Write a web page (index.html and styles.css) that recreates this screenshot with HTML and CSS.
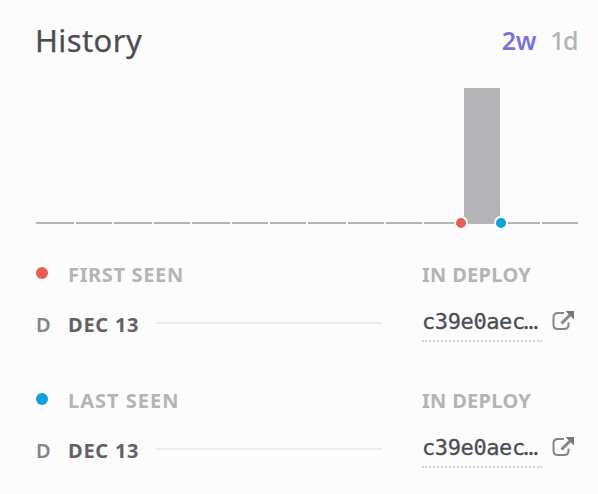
FILE: index.html
```html
<!DOCTYPE html>
<html lang="en">
<head>
<meta charset="utf-8">
<title>History</title>
<link rel="stylesheet" href="styles.css">
</head>
<body>
<main class="panel">
  <header class="header">
    <h1 class="title">History</h1>
    <nav class="ranges"><span class="range active">2w</span><span class="range day">1d</span></nav>
  </header>
  <div class="chart">
    <i></i><i></i><i></i><i></i><i></i><i></i><i></i><i></i><i></i><i></i><i></i>
    <i class="bar"><b class="marker first"></b><b class="marker last"></b></i>
    <i></i><i></i>
  </div>
  <section class="event">
    <span class="dot first"></span>
    <span class="label seen-first">FIRST SEEN</span>
    <span class="label deploy">IN DEPLOY</span>
    <span class="env">D</span>
    <div class="when"><span class="date">DEC 13</span><span class="rule"></span></div>
    <div class="commit">
      <span class="hash">c39e0aec<span class="dots">…</span></span>
      <svg class="open" viewBox="0 0 22 20"><path d="M12 2H6Q1.500 2 1.500 6.500V13.500Q1.500 18 6 18H12Q16.500 18 16.500 13.500V11.500"/><path class="shaft" d="M9.500 12.500L18 4"/><path class="head" d="M13.500 0H22V8.500Z"/></svg>
    </div>
  </section>
  <section class="event">
    <span class="dot last"></span>
    <span class="label seen-last">LAST SEEN</span>
    <span class="label deploy">IN DEPLOY</span>
    <span class="env">D</span>
    <div class="when"><span class="date">DEC 13</span><span class="rule"></span></div>
    <div class="commit">
      <span class="hash">c39e0aec<span class="dots">…</span></span>
      <svg class="open" viewBox="0 0 22 20"><path d="M12 2H6Q1.500 2 1.500 6.500V13.500Q1.500 18 6 18H12Q16.500 18 16.500 13.500V11.500"/><path class="shaft" d="M9.500 12.500L18 4"/><path class="head" d="M13.500 0H22V8.500Z"/></svg>
    </div>
  </section>
</main>
</body>
</html>
```
FILE: styles.css
```css
* { box-sizing: border-box; }
body {
  margin: 0;
  background: #fcfcfc;
  color: #4d4c54;
  font-family: "Noto Sans", sans-serif;
}
.panel { height: 494px; padding: 20px 20px 0 36px; overflow: hidden; }
.header { display: flex; justify-content: space-between; height: 68px; }
.title { margin: 0 0 0 -1px; font-size: 31px; font-weight: 400; line-height: 40px; letter-spacing: 0.4px; -webkit-text-stroke: 0.25px currentColor; }
.ranges { display: flex; gap: 14px; padding-right: 1px; font-size: 25px; line-height: 41px; }
.range { font-weight: 500; color: #b4b4b6; }
.day { letter-spacing: -1.5px; }
.active { font-weight: 600; color: #7774d8; letter-spacing: -0.3px; }
.chart {
  display: grid;
  grid-template-columns: 38px 36px 38px 36px 38px 36px 36px 38px 36px 36px 38px 36px 38px 36px;
  column-gap: 2px;
  align-items: end;
  height: 136px;
}
.chart i { height: 2px; background: #b4b4b6; }
.chart .bar { position: relative; height: 136px; }
.marker {
  position: absolute;
  bottom: -6px;
  width: 14px;
  height: 14px;
  border: 2px solid #fcfcfc;
  border-radius: 50%;
}
.marker.first { left: -10px; }
.marker.last { left: 30px; }
.first { background: #e95e54; }
.last { background: #0ea0dd; }
.event {
  display: grid;
  grid-template-columns: 32px 354px 156px;
  grid-template-rows: 50px 34px;
  height: 126px;
}
.chart + .event { margin-top: 36px; }
.dot { width: 12px; height: 12px; margin-top: 7px; border-radius: 50%; }
.label { font-size: 20px; font-weight: 700; line-height: 30px; color: #b4b4b6; white-space: nowrap; }
.seen-first { letter-spacing: 0.65px; }
.seen-last { letter-spacing: 1px; }
.deploy { letter-spacing: 0.3px; }
.env { font-size: 20px; font-weight: 600; line-height: 30px; color: #858489; }
.when { display: flex; height: 30px; }
.date { width: 88px; font-size: 20px; font-weight: 700; line-height: 30px; letter-spacing: 0.75px; color: #626166; }
.rule { width: 226px; height: 2px; margin-top: 12px; background: #ebebec; }
.commit { display: flex; gap: 10px; }
.hash {
  width: 120px;
  height: 32px;
  border-bottom: 2px dotted #d2d2d4;
  font: 22px/24px "DejaVu Sans Mono", monospace;
  letter-spacing: -0.4px;
  -webkit-text-stroke: 0.3px currentColor;
  white-space: nowrap;
}
.dots { margin-left: -1px; font: 700 17px/22px "Noto Sans", sans-serif; }
.open { width: 22px; height: 20px; margin-top: 1px; fill: none; stroke: #858487; stroke-width: 2; }
.shaft { stroke-width: 3; }
.head { fill: #777; stroke: none; }
```
